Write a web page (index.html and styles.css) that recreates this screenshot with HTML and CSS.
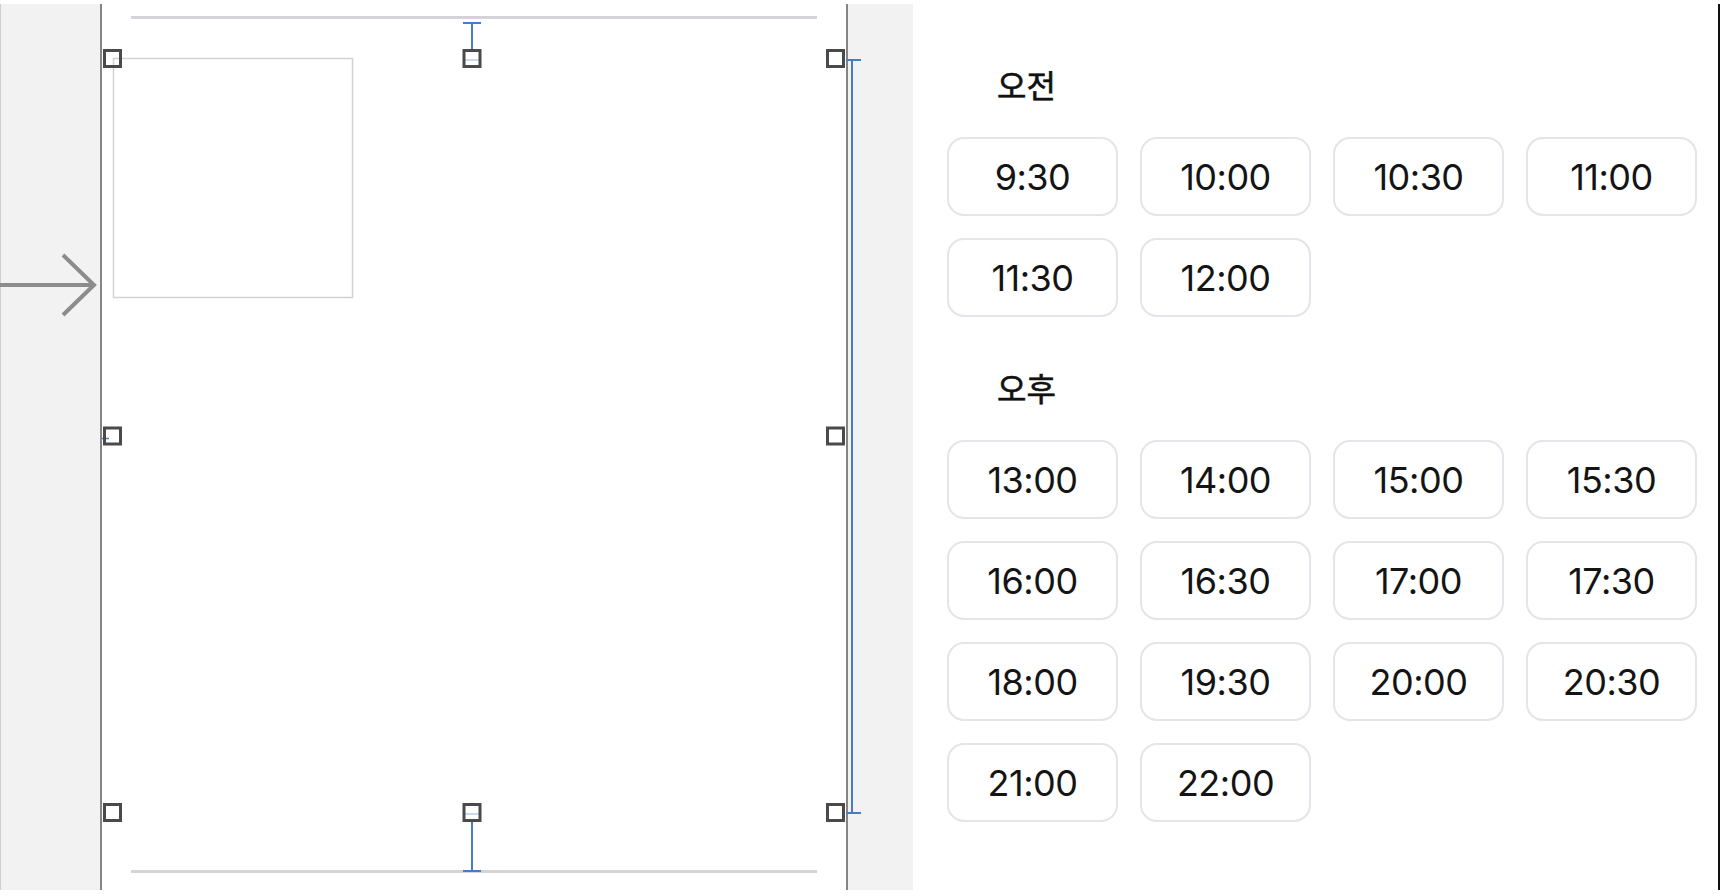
FILE: index.html
```html
<!DOCTYPE html>
<html lang="ko">
<head>
<meta charset="utf-8">
<title>Time slots</title>
<link rel="stylesheet" href="styles.css">
</head>
<body>
<div class="app">
  <div class="canvas">
    <div class="gutter gutter-left"></div>
    <div class="scene"></div>
    <div class="gutter gutter-right"></div>
    <svg class="adornments" width="913" height="886" viewBox="0 0 913 886" xmlns="http://www.w3.org/2000/svg">
      <!-- safe area guides -->
      <rect x="131" y="12" width="686" height="3" fill="#d4d4d8"/>
      <rect x="131" y="866" width="686" height="3" fill="#d4d4d8"/>
      <!-- image view placeholder -->
      <rect x="113.5" y="54.5" width="239" height="239" fill="none" stroke="#d2d2d2" stroke-width="1.5"/>
      <!-- entry arrow -->
      <g fill="none" stroke="#8c8c8c" stroke-width="4">
        <line x1="0" y1="281" x2="95" y2="281"/>
        <polyline points="63,251 94,281 63,311"/>
      </g>
      <!-- constraints -->
      <g stroke="#4a7cc4" stroke-width="2" fill="none">
        <line x1="472" y1="19" x2="472" y2="46"/>
        <line x1="463" y1="19" x2="481" y2="19"/>
        <line x1="472" y1="817" x2="472" y2="867"/>
        <line x1="463" y1="867" x2="481" y2="867"/>
        <line x1="852" y1="56" x2="852" y2="809"/>
        <line x1="846" y1="56" x2="861" y2="56"/>
        <line x1="846" y1="809" x2="861" y2="809"/>
        <line x1="102" y1="434.5" x2="109" y2="434.5" stroke-width="1.5"/>
      </g>
      <g stroke="#b9cde8" stroke-width="1.5">
        <line x1="464" y1="56" x2="480" y2="56"/>
        <line x1="464" y1="810" x2="480" y2="810"/>
      </g>
      <!-- resize handles -->
      <g fill="none" stroke="#4a4a4a" stroke-width="3">
        <rect x="104.5" y="46.5" width="16" height="16"/>
        <rect x="464" y="46.5" width="16" height="16"/>
        <rect x="827.5" y="46.5" width="16" height="16"/>
        <rect x="104.5" y="424" width="16" height="16"/>
        <rect x="827.5" y="424" width="16" height="16"/>
        <rect x="104.5" y="800.5" width="16" height="16"/>
        <rect x="464" y="800.5" width="16" height="16"/>
        <rect x="827.5" y="800.5" width="16" height="16"/>
      </g>
    </svg>
  </div>

  <div class="panel">
    <section class="period">
      <h2 class="period-title">오전</h2>
      <div class="slots">
        <button class="slot">9:30</button>
        <button class="slot">10:00</button>
        <button class="slot">10:30</button>
        <button class="slot">11:00</button>
        <button class="slot">11:30</button>
        <button class="slot">12:00</button>
      </div>
    </section>
    <section class="period period-pm">
      <h2 class="period-title">오후</h2>
      <div class="slots">
        <button class="slot">13:00</button>
        <button class="slot">14:00</button>
        <button class="slot">15:00</button>
        <button class="slot">15:30</button>
        <button class="slot">16:00</button>
        <button class="slot">16:30</button>
        <button class="slot">17:00</button>
        <button class="slot">17:30</button>
        <button class="slot">18:00</button>
        <button class="slot">19:30</button>
        <button class="slot">20:00</button>
        <button class="slot">20:30</button>
        <button class="slot">21:00</button>
        <button class="slot">22:00</button>
      </div>
    </section>
  </div>
</div>
</body>
</html>
```

FILE: styles.css
```css
* {
  box-sizing: border-box;
}

html, body {
  margin: 0;
  padding: 0;
  background: #ffffff;
}

body {
  font-family: "Inter", "Noto Sans CJK KR", sans-serif;
  color: #111111;
}

.app {
  display: flex;
  width: 1726px;
  height: 896px;
  padding: 4px 6px 6px 0;
}

.canvas {
  position: relative;
  display: flex;
  width: 913px;
  height: 886px;
  flex: none;
}

.gutter {
  background: #f2f2f2;
  height: 100%;
}

.gutter-left {
  width: 100px;
  border-left: 1px solid #cfcfcf;
}

.gutter-right {
  width: 65px;
}

.scene {
  width: 748px;
  height: 100%;
  background: #ffffff;
  border-left: 2px solid #858585;
  border-right: 2px solid #858585;
}

.adornments {
  position: absolute;
  left: 0;
  top: 0;
}

.panel {
  flex: 1;
  height: 886px;
  border-right: 2px solid #111111;
  padding: 60px 20px 0 34px;
}

.period-title {
  margin: 0 0 33px 50px;
  font-family: "Noto Sans CJK KR", sans-serif;
  font-size: 32px;
  font-weight: 400;
  -webkit-text-stroke: 0.6px #111111;
  line-height: 40px;
  color: #111111;
}

.period-pm {
  margin-top: 50px;
}

.slots {
  display: grid;
  grid-template-columns: repeat(4, 171px);
  grid-auto-rows: 79px;
  gap: 22px;
}

.slot {
  display: flex;
  align-items: center;
  justify-content: center;
  margin: 0;
  padding: 0;
  background: #ffffff;
  border: 2px solid #e4e4ea;
  border-radius: 17px;
  font-family: "Inter", sans-serif;
  font-size: 36px;
  font-weight: 400;
  letter-spacing: -0.5px;
  color: #141414;
}
```
